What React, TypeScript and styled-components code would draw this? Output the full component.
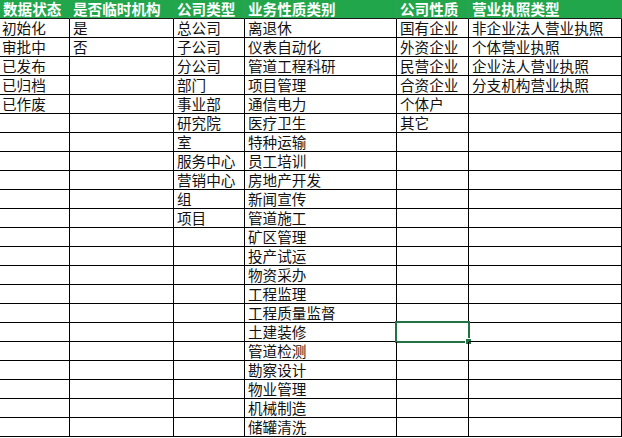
import React from "react";
import styled, { createGlobalStyle } from "styled-components";

const Global = createGlobalStyle`
  html, body { margin: 0; padding: 0; background: #fff; }
  body { font-family: "Noto Sans CJK SC", "Noto Sans", sans-serif; overflow: hidden; }
`;

const columns: { title: string; items: string[] }[] = [
  { title: "数据状态", items: ["初始化", "审批中", "已发布", "已归档", "已作废"] },
  { title: "是否临时机构", items: ["是", "否"] },
  {
    title: "公司类型",
    items: ["总公司", "子公司", "分公司", "部门", "事业部", "研究院", "室", "服务中心", "营销中心", "组", "项目"],
  },
  {
    title: "业务性质类别",
    items: [
      "离退休", "仪表自动化", "管道工程科研", "项目管理", "通信电力", "医疗卫生", "特种运输", "员工培训",
      "房地产开发", "新闻宣传", "管道施工", "矿区管理", "投产试运", "物资采办", "工程监理", "工程质量监督",
      "土建装修", "管道检测", "勘察设计", "物业管理", "机械制造", "储罐清洗",
    ],
  },
  { title: "公司性质", items: ["国有企业", "外资企业", "民营企业", "合资企业", "个体户", "其它"] },
  { title: "营业执照类型", items: ["非企业法人营业执照", "个体营业执照", "企业法人营业执照", "分支机构营业执照"] },
];

const ROWS = 22;
const SELECTED = { row: 16, col: 4 };

const Sheet = styled.div`
  display: grid;
  grid-template-columns: 70px 104px 71px 152px 72px 153px;
  grid-auto-rows: 19px;
  width: 622px;
`;

const HeaderCell = styled.div`
  box-sizing: border-box;
  display: flex;
  align-items: center;
  background: #22a64c;
  color: #fff;
  font-weight: 700;
  font-size: 14.6px;
  line-height: 1;
  padding: 0 0 0 3px;
  border-bottom: 1px solid #1b1b1b;
  border-right: 1px solid #2aa452;
  white-space: nowrap;
`;

const Cell = styled.div<{ $first?: boolean }>`
  position: relative;
  box-sizing: border-box;
  display: flex;
  align-items: center;
  color: #111;
  font-size: 14.6px;
  line-height: 1;
  padding: 1px 0 0 ${(p) => (p.$first ? 2 : 3)}px;
  border-bottom: 1px solid #000;
  border-right: 1px solid #000;
  white-space: nowrap;
`;

const Selection = styled.div`
  position: absolute;
  left: -2px;
  top: -2px;
  right: -2px;
  bottom: -2px;
  border: 2px solid #217346;
  pointer-events: none;
`;

const Handle = styled.div`
  position: absolute;
  right: -4px;
  bottom: -4px;
  width: 5px;
  height: 5px;
  background: #217346;
  border: 1px solid #fff;
`;

export default function App() {
  const cells: React.ReactNode[] = [];
  columns.forEach((c, ci) => cells.push(<HeaderCell key={`h${ci}`}>{c.title}</HeaderCell>));
  for (let r = 0; r < ROWS; r++) {
    columns.forEach((c, ci) => {
      const sel = r === SELECTED.row && ci === SELECTED.col;
      cells.push(
        <Cell key={`${r}-${ci}`} $first={ci === 0}>
          {c.items[r] ?? ""}
          {sel && (
            <Selection>
              <Handle />
            </Selection>
          )}
        </Cell>
      );
    });
  }
  return (
    <>
      <Global />
      <Sheet>{cells}</Sheet>
    </>
  );
}
